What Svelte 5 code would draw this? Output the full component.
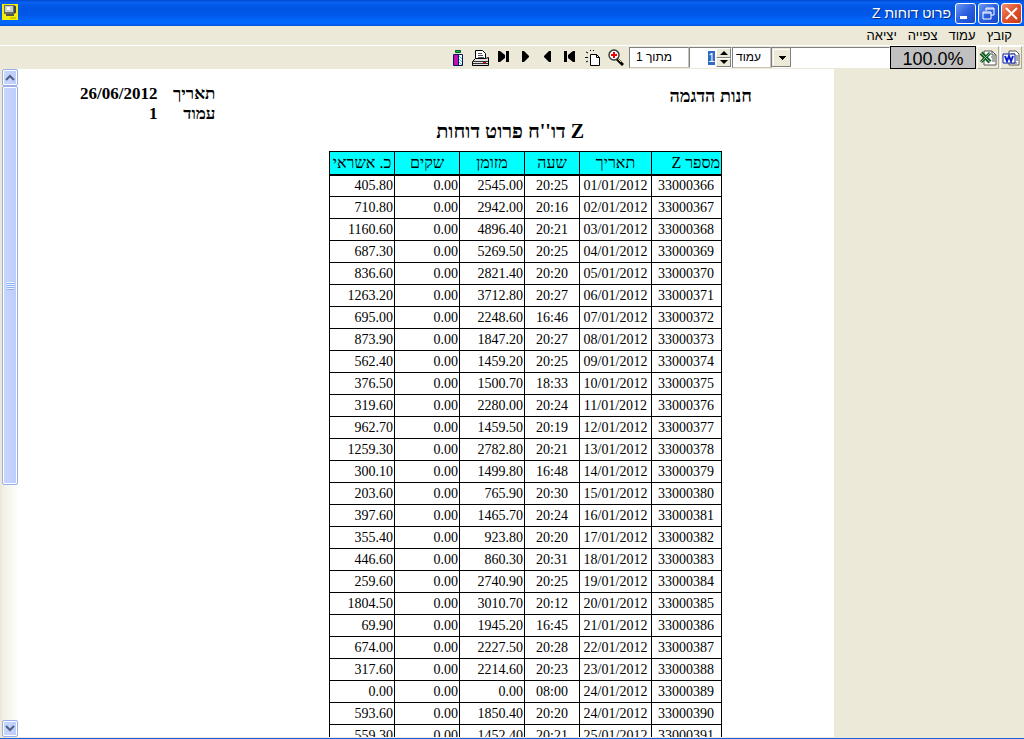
<script lang="ts">
  import { onMount } from "svelte";

  let page = $state("1");
  let pageInput: HTMLInputElement;

  const menus = ["קובץ", "עמוד", "צפייה", "יציאה"];
  const headers = ["מספר Z", "תאריך", "שעה", "מזומן", "שקים", "כ. אשראי"];

  // number, date, time, cash, credit
  const rows = [
    ["33000366", "01/01/2012", "20:25", "2545.00", "405.80"],
    ["33000367", "02/01/2012", "20:16", "2942.00", "710.80"],
    ["33000368", "03/01/2012", "20:21", "4896.40", "1160.60"],
    ["33000369", "04/01/2012", "20:25", "5269.50", "687.30"],
    ["33000370", "05/01/2012", "20:20", "2821.40", "836.60"],
    ["33000371", "06/01/2012", "20:27", "3712.80", "1263.20"],
    ["33000372", "07/01/2012", "16:46", "2248.60", "695.00"],
    ["33000373", "08/01/2012", "20:27", "1847.20", "873.90"],
    ["33000374", "09/01/2012", "20:25", "1459.20", "562.40"],
    ["33000375", "10/01/2012", "18:33", "1500.70", "376.50"],
    ["33000376", "11/01/2012", "20:24", "2280.00", "319.60"],
    ["33000377", "12/01/2012", "20:19", "1459.50", "962.70"],
    ["33000378", "13/01/2012", "20:21", "2782.80", "1259.30"],
    ["33000379", "14/01/2012", "16:48", "1499.80", "300.10"],
    ["33000380", "15/01/2012", "20:30", "765.90", "203.60"],
    ["33000381", "16/01/2012", "20:24", "1465.70", "397.60"],
    ["33000382", "17/01/2012", "20:20", "923.80", "355.40"],
    ["33000383", "18/01/2012", "20:31", "860.30", "446.60"],
    ["33000384", "19/01/2012", "20:25", "2740.90", "259.60"],
    ["33000385", "20/01/2012", "20:12", "3010.70", "1804.50"],
    ["33000386", "21/01/2012", "16:45", "1945.20", "69.90"],
    ["33000387", "22/01/2012", "20:28", "2227.50", "674.00"],
    ["33000388", "23/01/2012", "20:23", "2214.60", "317.60"],
    ["33000389", "24/01/2012", "08:00", "0.00", "0.00"],
    ["33000390", "24/01/2012", "20:20", "1850.40", "593.60"],
    ["33000391", "25/01/2012", "20:21", "1452.40", "559.30"],
  ];

  function step(n: number) {
    page = String(Math.max(1, Number(page) + n));
  }

  onMount(() => {
    pageInput.focus();
    pageInput.select();
  });
</script>

<div class="window" dir="rtl">
  <header class="titlebar">
    <div class="controls">
      <button class="ctl close" aria-label="סגור">
        <svg width="19" height="19" viewBox="0 0 19 19"><path d="M4 4l11 11M15 4l-11 11" stroke="#fff" stroke-width="2" /></svg>
      </button>
      <button class="ctl" aria-label="שחזר">
        <svg width="19" height="19" viewBox="0 0 19 19"><path d="M7 7V4h8v7h-3M7 5h8M4 8h8v7H4zM4 9h8" fill="none" stroke="#fff" /></svg>
      </button>
      <button class="ctl" aria-label="מזער">
        <svg width="19" height="19" viewBox="0 0 19 19"><path d="M4 12h7v3H4z" fill="#fff" /></svg>
      </button>
    </div>
    <h1>פרוט דוחות Z</h1>
    <svg class="app-icon" width="16" height="16" viewBox="0 0 16 16">
      <path d="M0 0h16v16H0z" fill="#f4ee00" />
      <path d="M2 1h11v9H2z" fill="#6d6f62" />
      <path d="M3 2h8v6H3z" fill="#c8d0c8" />
      <path d="M5 3h3v3H5z" fill="#fff" />
      <path d="M12 2h2v7h-2z" fill="#444" />
      <path d="M4 10h8v2H4z" fill="#555" />
      <path d="M8 14h6" stroke="#a8a000" />
    </svg>
  </header>

  <nav class="menubar">
    {#each menus as menu}
      <button>{menu}</button>
    {/each}
  </nav>

  <div class="toolbar">
    <button class="export" aria-label="Word">
      <svg width="18" height="16" viewBox="0 0 18 16">
        <path d="M7 1h7l3 3v11H7z" fill="#fff" stroke="#555" />
        <path d="M9 4h4M14 6h2M14 8h2M14 10h2M9 13h6" stroke="#555" />
        <path d="M1 4h12v9H1z" fill="#fff" stroke="#0a1fa8" />
        <path d="M3 6l2 5 2-5 2 5 2-5" fill="none" stroke="#0a1fd0" stroke-width="2" />
      </svg>
    </button>
    <button class="export" aria-label="Excel">
      <svg width="18" height="16" viewBox="0 0 18 16">
        <path d="M5 1h8l4 4v10H5z" fill="#fff" stroke="#555" />
        <path d="M13 1v4h4M12 7h4M13 9h3M13 11h3" fill="none" stroke="#555" />
        <path d="M2 3l9 9" stroke="#1c5a2a" stroke-width="4" />
        <path d="M11 3l-9 9" stroke="#1c5a2a" stroke-width="3" />
        <path d="M2 3l9 9M11 3l-9 9" stroke="#7ac48a" />
      </svg>
    </button>
    <output class="percent" dir="ltr">100.0%</output>
    <select class="combo" aria-label="מדפסת"><option></option></select>
    <label class="field page-label" for="page">עמוד</label>
    <div class="spinner">
      <input id="page" type="text" dir="ltr" bind:value={page} bind:this={pageInput} />
      <div class="steps">
        <button aria-label="הבא" onclick={() => step(1)}>
          <svg width="8" height="4" viewBox="0 0 8 4"><path d="M4 0l4 4H0z" /></svg>
        </button>
        <button aria-label="הקודם" onclick={() => step(-1)}>
          <svg width="8" height="4" viewBox="0 0 8 4"><path d="M0 0h8L4 4z" /></svg>
        </button>
      </div>
    </div>
    <span class="field total">מתוך 1</span>
    <div class="tools">
      <button aria-label="זום">
        <svg width="16" height="17" viewBox="0 0 16 17">
          <path d="M9 10l6 6" stroke="#000" stroke-width="3" />
          <path d="M10 10l3 3" stroke="#e8d24a" />
          <circle cx="6" cy="6" r="5" fill="#fff" stroke="#333" stroke-width="1.4" />
          <path d="M6 3v6M3 6h6" stroke="#f00000" stroke-width="2" />
        </svg>
      </button>
      <button aria-label="עמוד חדש">
        <svg width="15" height="17" viewBox="0 0 15 17">
          <path d="M5.500 5.500h6l3 3v8h-9z" fill="#fff" stroke="#000" />
          <path d="M11.500 5.500v3h3" fill="none" stroke="#000" />
          <path d="M1 3l2 1M0 8.500h3M1 13l2-1M5 1l1 1M9 1l-1 1" stroke="#000" />
        </svg>
      </button>
      <button aria-label="ראשון">
        <svg width="14" height="17" viewBox="0 0 14 17"><path d="M1 2h3v11H1zM12 2v11h-2L5 9V6l5-4z" /></svg>
      </button>
      <button aria-label="אחורה">
        <svg width="14" height="17" viewBox="0 0 14 17"><path d="M10 2v11H8L3 8V7l5-5z" /></svg>
      </button>
      <button aria-label="קדימה">
        <svg width="14" height="17" viewBox="0 0 14 17"><path d="M3 2v11h2l5-5V7L5 2z" /></svg>
      </button>
      <button aria-label="אחרון">
        <svg width="14" height="17" viewBox="0 0 14 17"><path d="M1 2v11h2l5-4V6L3 2zM9 2h3v11H9z" /></svg>
      </button>
      <button aria-label="הדפס">
        <svg width="17" height="17" viewBox="0 0 17 17">
          <path d="M3.500 9.500V1.500h7l3 3v5z" fill="#fff" stroke="#000" />
          <path d="M6 4.500h4M6 6.500h5M6 8.500h6" stroke="#555" />
          <path d="M0.500 12.500l3-3h10l3-1v8h-16z" fill="#e0e0e0" stroke="#000" />
          <path d="M1 12.500h15M1 14.500h15" stroke="#333" />
          <path d="M11 13.500h3" stroke="#d00" />
        </svg>
      </button>
      <button aria-label="יציאה">
        <svg width="12" height="17" viewBox="0 0 12 17">
          <path d="M3.500 1.500h5v2h-5z" fill="#0c3" stroke="#052" />
          <path d="M1.500 5.500h9v11h-9z" fill="#fff" stroke="#101060" />
          <path d="M2 6h4v10H2z" fill="#c010b0" />
          <path d="M6.500 5v12" stroke="#101060" />
          <path d="M7 7l3 3M7 10l3 3M7 13l3 3" stroke="#3cc" />
        </svg>
      </button>
    </div>
  </div>

  <main>
    <section class="paper">
      <div class="report-head">
        <strong>חנות הדגמה</strong>
        <dl>
          <dt>תאריך</dt>
          <dd>26/06/2012</dd>
          <dt>עמוד</dt>
          <dd>1</dd>
        </dl>
      </div>
      <h2>Z דו''ח פרוט דוחות</h2>
      <table>
        <thead>
          <tr>
            {#each headers as header}
              <th>{header}</th>
            {/each}
          </tr>
        </thead>
        <tbody>
          {#each rows as [id, date, time, cash, credit]}
            <tr>
              <td class="id">{id}</td>
              <td class="mid">{date}</td>
              <td class="mid">{time}</td>
              <td>{cash}</td>
              <td>0.00</td>
              <td>{credit}</td>
            </tr>
          {/each}
        </tbody>
      </table>
    </section>
    <div class="scrollbar">
      <button aria-label="למעלה">
        <svg width="10" height="7" viewBox="0 0 10 7"><path d="M1 6l4-4 4 4" fill="none" stroke="#4d6185" stroke-width="2" /></svg>
      </button>
      <div class="track"><div class="thumb"><i></i></div></div>
      <button aria-label="למטה">
        <svg width="10" height="7" viewBox="0 0 10 7"><path d="M1 1l4 4 4-4" fill="none" stroke="#4d6185" stroke-width="2" /></svg>
      </button>
    </div>
  </main>
</div>

<style>
  :global(body) {
    margin: 0;
    overflow: hidden;
  }

  .window {
    display: flex;
    flex-direction: column;
    height: 100vh;
    box-sizing: border-box;
    border-bottom: 1px solid #1c5fdc;
    background: #ece9d8;
    font-family: "Liberation Sans", sans-serif;
    font-size: 12px;
    color: #000;
  }

  button {
    padding: 0;
    border: none;
    background: none;
    font: inherit;
    color: inherit;
  }

  svg {
    display: block;
  }

  .titlebar {
    display: flex;
    align-items: center;
    gap: 4px;
    height: 26px;
    padding: 0 2px;
    background: linear-gradient(#0046d0, #0a62f0 8%, #0054e3 30%, #0058ea 60%, #0068ff 80%, #0066fc 92%, #0050d8);
  }

  .controls {
    display: flex;
    gap: 2px;
  }

  .ctl {
    width: 21px;
    height: 21px;
    border: 1px solid #fff;
    border-radius: 3px;
    background: linear-gradient(135deg, #6f97f5, #2a5fe0 50%, #1848c8);
  }

  .close {
    background: linear-gradient(135deg, #f09070, #e0502a 50%, #c83c18);
  }

  h1 {
    flex: 1;
    margin: 0;
    font-size: 14px;
    font-weight: normal;
    color: #fff;
    text-shadow: 1px 1px #0a2a80;
  }

  .app-icon {
    margin-bottom: 2px;
  }

  .menubar {
    display: flex;
    gap: 11px;
    height: 19px;
    padding: 0 12px;
    border-bottom: 1px solid #fff;
    font-size: 13px;
  }

  .toolbar {
    display: flex;
    height: 23px;
    padding: 0 2px;
    align-items: stretch;
  }

  .export {
    display: flex;
    align-items: center;
    justify-content: center;
    width: 22px;
    margin-left: 1px;
    box-sizing: border-box;
    border: 1px solid;
    border-color: #fff #aca899 #aca899 #fff;
  }

  .percent {
    width: 86px;
    box-sizing: border-box;
    border: 1px solid #000;
    background: #c0c0c0;
    font-size: 18px;
    line-height: 25px;
    text-align: center;
  }

  .combo {
    appearance: none;
    width: 119px;
    margin: 1px 0;
    border: 1px solid;
    border-color: #808080 #fff #fff #808080;
    border-radius: 0;
    background: linear-gradient(#000, #000) 7px 8px / 7px 1px no-repeat, linear-gradient(#000, #000) 8px 9px / 5px 1px no-repeat,
      linear-gradient(#000, #000) 9px 10px / 3px 1px no-repeat, linear-gradient(#000, #000) 10px 11px / 1px 1px no-repeat,
      linear-gradient(#808080, #808080) 18px 0 / 1px 100% no-repeat, linear-gradient(#808080, #808080) 0 100% / 18px 1px no-repeat,
      linear-gradient(#fff, #fff) 1px 1px / 17px 1px no-repeat, linear-gradient(#fff, #fff) 1px 1px / 1px 16px no-repeat,
      linear-gradient(#ece9d8, #ece9d8) 0 0 / 18px 100% no-repeat, #fff;
  }

  .field {
    box-sizing: border-box;
    margin: 1px 0;
    border: 1px solid;
    border-color: #808080 #c8c4b8 #c8c4b8 #808080;
    background: #fff;
    line-height: 18px;
  }

  .page-label {
    width: 39px;
    padding-right: 9px;
  }

  .total {
    width: 60px;
    padding-right: 16px;
  }

  .spinner {
    display: flex;
    flex-direction: row-reverse;
    width: 43px;
    box-sizing: border-box;
    margin: 1px 0;
    border: 1px solid;
    border-color: #808080 #fff #fff #808080;
    background: #fff;
  }

  .spinner input {
    flex: 1;
    min-width: 0;
    padding: 0 1px;
    border: none;
    outline: none;
    background: none;
    font: inherit;
    text-align: right;
  }

  .spinner input::selection {
    background: #316ac5;
    color: #fff;
  }

  .steps {
    display: grid;
    grid-template-rows: 1fr 1fr;
    width: 15px;
  }

  .steps button {
    display: flex;
    align-items: center;
    justify-content: center;
    border: 1px solid;
    border-color: #fff #808080 #808080 #fff;
    background: #ece9d8;
  }

  .tools {
    display: flex;
    gap: 8px;
    align-items: center;
    padding: 0 5px;
  }

  main {
    flex: 1;
    display: flex;
    min-height: 0;
    padding-right: 190px;
    padding-left: 2px;
    border-bottom: 1px solid #ece9d8;
  }

  .paper {
    flex: 1;
    overflow: hidden;
    background: #fff;
    font-family: "Liberation Serif", serif;
  }

  .report-head {
    display: flex;
    justify-content: space-between;
    align-items: flex-start;
    padding: 15px 82px 0 62px;
    font-size: 17px;
    font-weight: bold;
    line-height: 20px;
  }

  .report-head strong {
    padding-top: 2px;
    font-size: 18px;
  }

  dl {
    display: grid;
    grid-template-columns: 58px auto;
    margin: 0;
  }

  dd {
    margin: 0;
  }

  h2 {
    margin: 0 250px 13px 0;
    font-size: 20px;
    line-height: 14px;
  }

  table {
    table-layout: fixed;
    width: 393px;
    margin-right: 112px;
    border-collapse: collapse;
    font-size: 14px;
  }

  th,
  td {
    box-sizing: border-box;
    height: 22px;
    padding: 0 1px;
    border: 1px solid #000;
    line-height: 20px;
    white-space: nowrap;
  }

  th {
    width: 65px;
    height: 23px;
    border-bottom-width: 2px;
    background: #0ff;
    font-size: 16px;
    font-weight: normal;
  }

  th:nth-child(1) {
    width: 70px;
    text-align: right;
  }

  th:nth-child(2) {
    width: 72px;
  }

  th:nth-child(3) {
    width: 55px;
  }

  td {
    text-align: right;
  }

  .id {
    padding-right: 7px;
  }

  .mid {
    text-align: center;
  }

  .scrollbar {
    display: flex;
    flex-direction: column;
    width: 16px;
    background: linear-gradient(90deg, #f0efe4, #fefefb);
  }

  .scrollbar button,
  .thumb {
    display: flex;
    align-items: center;
    justify-content: center;
    box-sizing: border-box;
    border: 1px solid #98b0e8;
    border-radius: 2px;
    background: linear-gradient(90deg, #c9d7fc, #bccdfa);
    box-shadow: inset 0 0 0 1px #fff;
  }

  .scrollbar button {
    height: 17px;
  }

  .track {
    flex: 1;
  }

  .thumb {
    height: 63%;
  }

  .thumb i {
    width: 7px;
    height: 8px;
    background: repeating-linear-gradient(#eef4fe 0 1px, #8cb0f8 1px 2px);
  }
</style>
